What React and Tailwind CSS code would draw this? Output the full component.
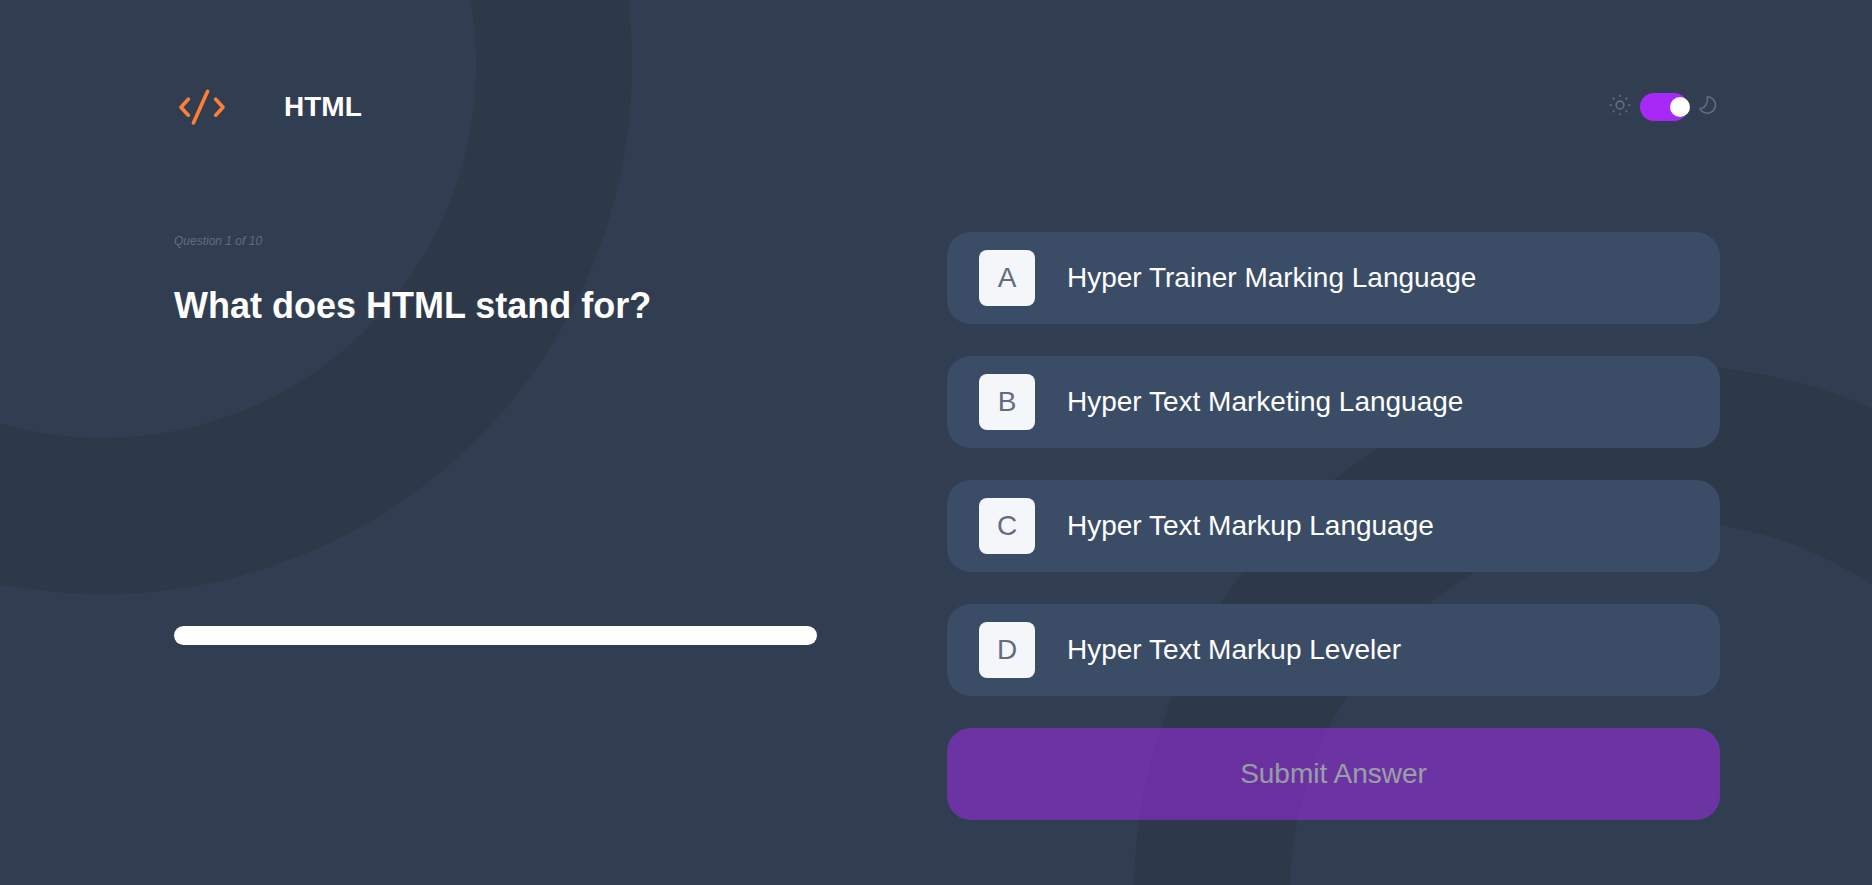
import { useState } from "react";

const OPTIONS = [
  { letter: "A", text: "Hyper Trainer Marking Language" },
  { letter: "B", text: "Hyper Text Marketing Language" },
  { letter: "C", text: "Hyper Text Markup Language" },
  { letter: "D", text: "Hyper Text Markup Leveler" },
];

function CodeIcon() {
  return (
    <svg className="size-14 text-[#ff7e35]" viewBox="0 0 56 56" fill="none" stroke="currentColor" strokeWidth="3.6" strokeLinecap="round" strokeLinejoin="round" aria-hidden="true">
      <path d="M14.3 20.2 7 28.200l7.300 8M41.700 20.200l7.300 8-7.300 8M33.600 12.300 19.400 44" />
    </svg>
  );
}

function SunIcon() {
  return (
    <svg className="size-6 text-[#626c7f]" viewBox="0 0 24 24" fill="none" stroke="currentColor" strokeWidth="1.6" aria-hidden="true">
      <circle cx="12" cy="12" r="3.900" />
      <path d="M12 1.700v2.400M12 19.900v2.400M1.700 12h2.400M19.900 12h2.400M4.700 4.700l1.800 1.800M17.500 17.500l1.800 1.800M4.700 19.300l1.800-1.800M17.500 6.500l1.800-1.800" />
    </svg>
  );
}

function MoonIcon() {
  return (
    <svg className="size-6 text-[#626c7f]" viewBox="0 0 24 24" fill="none" stroke="currentColor" strokeWidth="1.6" strokeLinejoin="round" aria-hidden="true">
      <path d="M11.300 3.800a8.200 8.200 0 1 1-7.300 12c5.200-.8 8.300-5.800 7.300-12Z" />
    </svg>
  );
}

function Rings() {
  return (
    <div className="pointer-events-none absolute inset-0 -z-10 overflow-hidden" aria-hidden="true">
      <div className="absolute -top-[464px] -left-[426px] size-[1058px] rounded-full border-[156px] border-[#2d3949]" />
      <div className="absolute -right-[320px] -bottom-[538px] size-[1058px] rounded-full border-[156px] border-[#2d3949]" />
    </div>
  );
}

export default function App() {
  const [dark, setDark] = useState(true);
  const [selected, setSelected] = useState(null);

  return (
    <div className="relative isolate min-h-screen bg-[#313e51] pt-[79px] pr-[152px] pb-16 pl-[174px] font-['Liberation_Sans',Arial,sans-serif] text-white">
      <Rings />
      <header className="flex items-center justify-between">
        <div className="flex items-center gap-[54px]">
          <CodeIcon />
          <p className="text-[28px] leading-8 font-bold">HTML</p>
        </div>
        <label className="flex cursor-pointer items-start gap-2">
          <SunIcon />
          <input
            type="checkbox"
            role="switch"
            aria-label="Dark mode"
            checked={dark}
            onChange={(e) => setDark(e.target.checked)}
            className="flex h-7 w-12 cursor-pointer appearance-none items-center rounded-full bg-[#a729f5] before:size-5 before:shrink-0 before:translate-x-1 before:rounded-full before:bg-white before:transition-transform checked:before:translate-x-[30px]"
          />
          <MoonIcon />
        </label>
      </header>

      <main className="mt-[97px] grid grid-cols-2">
        <section className="pr-[130px]">
          <p className="text-xs leading-[18px] text-[#626c7f] italic">Question 1 of 10</p>
          <h1 className="mt-8 text-4xl leading-12 font-bold">What does HTML stand for?</h1>
          <div role="progressbar" aria-label="Quiz progress" aria-valuemin={0} aria-valuemax={10} aria-valuenow={0} className="mt-[296px] h-[19px] rounded-full bg-white" />
        </section>

        <form className="flex flex-col gap-8" onSubmit={(e) => e.preventDefault()}>
          {OPTIONS.map(({ letter, text }) => (
            <button
              key={letter}
              type="button"
              aria-pressed={selected === letter}
              onClick={() => setSelected(letter)}
              className="flex h-[92px] items-center gap-8 rounded-3xl bg-[#3b4d66] px-8 text-left text-[28px] leading-8"
            >
              <span className="flex size-14 items-center justify-center rounded-lg bg-[#f4f6fa] text-[#626c7f]">{letter}</span>
              <span>{text}</span>
            </button>
          ))}
          <button type="submit" disabled={!selected} className="h-[92px] rounded-3xl bg-[#a729f5] text-[28px] leading-8 disabled:opacity-50">
            Submit Answer
          </button>
        </form>
      </main>
    </div>
  );
}
